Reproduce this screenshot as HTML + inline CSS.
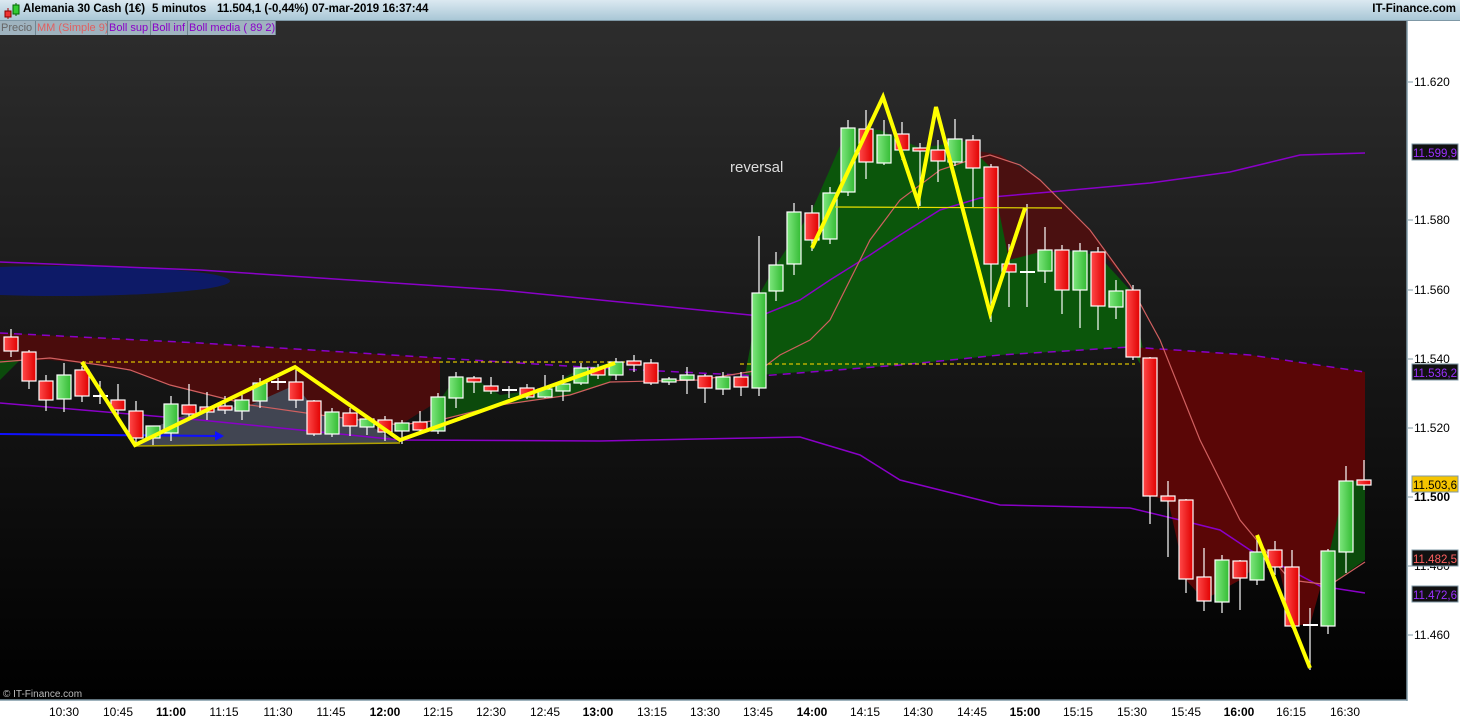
<!DOCTYPE html>
<html><head><meta charset="utf-8">
<style>
body{margin:0;width:1460px;height:720px;overflow:hidden;background:#fff;font-family:"Liberation Sans",sans-serif;position:relative}
#top{position:absolute;left:0;top:0;width:1460px;height:20px;background:linear-gradient(#dbe9f1,#a9c7d6);border-bottom:1px solid #7f98a6;font-size:11.5px;font-weight:bold;color:#000}
#top span{position:absolute;top:3px}
#leg{position:absolute;left:0;top:21px;height:14px;font-size:11px;display:flex;white-space:nowrap}
#leg div{background:#9fb3bf;border-right:1px solid #6f8591;padding:0 1px;line-height:14px;height:14px;overflow:hidden;white-space:nowrap;flex:none;box-sizing:border-box}
svg{position:absolute;left:0;top:0}
</style></head><body>
<svg id="c" width="1460" height="720" xmlns="http://www.w3.org/2000/svg">
<defs>
<linearGradient id="bg" x1="0" y1="0" x2="0" y2="1"><stop offset="0" stop-color="#2d2d2d"/><stop offset="1" stop-color="#000"/></linearGradient>
<linearGradient id="gr" x1="0" y1="0" x2="1" y2="0"><stop offset="0" stop-color="#7fe77f"/><stop offset="1" stop-color="#33bb33"/></linearGradient>
<linearGradient id="rd" x1="0" y1="0" x2="1" y2="0"><stop offset="0" stop-color="#ff4a4a"/><stop offset="1" stop-color="#e00000"/></linearGradient>
</defs>
<rect x="0" y="21" width="1407" height="679" fill="url(#bg)"/>
<ellipse cx="60" cy="281" rx="170" ry="15" fill="#0a1a7a" opacity="0.8"/>
<polygon fill="#4a0c0c" points="0,333 200,343 440,358 440,400 400,425 320,415 250,405 170,385 130,370 100,365 50,360 0,360"/>
<polygon fill="#0c4a0c" points="440,400 456,377 474,378 500,395 545,389 581,368 616,362 610,382 570,395 500,405 440,420"/>
<polygon fill="#0c4a0c" points="0,360 20,360 0,380"/>
<polygon fill="#414552" points="135,446 400,443 360,420 320,415 295,385 250,405 190,413 160,425"/>
<polygon fill="#0b560b" points="745,376 900,365 1000,355 1130,347 1150,380 1130,290 1098,255 1062,250 1040,255 990,167 973,140 920,148 880,130 848,128 812,210 776,265 760,293"/>
<polygon fill="#4a1010" points="973,150 1000,155 1040,180 1090,230 1130,285 1100,250 1062,250 1040,252 1009,260 990,167"/>
<polygon fill="#5a0606" points="1130,347 1250,355 1365,372 1365,550 1330,553 1310,625 1292,625 1275,550 1240,580 1204,600 1186,580 1168,500 1150,496 1140,358"/>
<polygon fill="#0b4a0b" points="1330,550 1346,481 1365,481 1365,560 1330,585"/>
<polyline fill="none" stroke="#8a00c8" stroke-width="1.5" points="0,262 200,270 500,290 700,310 760,316 800,300 830,280 870,255 900,235 940,210 980,198 1050,192 1150,183 1230,172 1300,155 1365,153"/>
<polyline fill="none" stroke="#8a00c8" stroke-width="1.5" points="0,403 200,420 400,440 600,441 800,437 860,455 900,480 1000,505 1130,508 1180,520 1220,530 1250,550 1290,570 1320,586 1365,593"/>
<polyline fill="none" stroke="#8a00c8" stroke-width="1.5" stroke-dasharray="8,6" points="0,333 200,343 440,358 600,368 760,376 900,365 1000,355 1130,347 1250,355 1365,372"/>
<polyline fill="none" stroke="#d06060" stroke-width="1.2" points="0,362 50,358 100,365 130,370 170,385 250,405 320,415 400,425 440,420 500,405 570,395 610,382 700,380 760,370 780,355 810,340 830,320 870,240 900,200 940,170 970,160 990,155 1020,165 1040,180 1090,230 1130,285 1160,340 1200,440 1240,520 1290,580 1330,585 1365,562"/>
<line x1="82" y1="362" x2="640" y2="362" stroke="#d8c000" stroke-width="1.2" stroke-dasharray="4,3"/>
<line x1="740" y1="364" x2="1135" y2="364" stroke="#d8c000" stroke-width="1.2" stroke-dasharray="4,3"/>
<line x1="0" y1="434" x2="215" y2="436" stroke="#1010ff" stroke-width="2"/>
<polygon points="215,431 224,436 215,441" fill="#1010ff"/>
<g id="candles"></g>
<line x1="135" y1="446" x2="400" y2="443" stroke="#b0a000" stroke-width="1.5"/>
<line x1="835" y1="207" x2="1062" y2="208" stroke="#e8e000" stroke-width="1.2"/>
<polyline fill="none" stroke="#ffff00" stroke-width="4" points="82,362 135,445 295,367 400,440 615,363"/>
<polyline fill="none" stroke="#ffff00" stroke-width="4" points="812,248 883,97 918,202 936,107 990,313 1025,208"/>
<line x1="1257" y1="535" x2="1310" y2="668" stroke="#ffff00" stroke-width="4"/>
<text x="730" y="172" fill="#dcdcdc" font-size="15" font-family="Liberation Sans">reversal</text>
<text x="3" y="697" fill="#bbb" font-size="10" font-family="Liberation Sans">© IT-Finance.com</text>
<rect x="1407" y="21" width="53" height="699" fill="#fff"/>
<rect x="0" y="700" width="1460" height="20" fill="#fff"/>
<line x1="1407" y1="21" x2="1407" y2="701" stroke="#7f98a6" stroke-width="1.5"/>
<line x1="0" y1="700" x2="1407" y2="700" stroke="#7f98a6" stroke-width="1.5"/>
<g font-size="12" font-family="Liberation Sans" fill="#000">
<g stroke="#7f98a6"><line x1="1408" y1="82" x2="1413" y2="82"/><line x1="1408" y1="220" x2="1413" y2="220"/><line x1="1408" y1="290" x2="1413" y2="290"/><line x1="1408" y1="359" x2="1413" y2="359"/><line x1="1408" y1="428" x2="1413" y2="428"/><line x1="1408" y1="497" x2="1413" y2="497"/><line x1="1408" y1="566" x2="1413" y2="566"/><line x1="1408" y1="635" x2="1413" y2="635"/></g>
<text x="1414" y="86">11.620</text><text x="1414" y="224">11.580</text><text x="1414" y="294">11.560</text><text x="1414" y="363">11.540</text><text x="1414" y="432">11.520</text><text x="1414" y="501" font-weight="bold">11.500</text><text x="1414" y="570">11.480</text><text x="1414" y="639">11.460</text>
</g>
<g font-size="11.5" font-family="Liberation Sans">
<rect x="1412" y="144" width="46" height="16" fill="#111" stroke="#7f98a6"/><text x="1413" y="157" fill="#9b30ff" textLength="44">11.599,9</text>
<rect x="1412" y="364" width="46" height="16" fill="#111" stroke="#7f98a6"/><text x="1413" y="377" fill="#9b30ff" textLength="44">11.536,2</text>
<rect x="1412" y="476" width="46" height="16" fill="#f5c400" stroke="#7f98a6"/><text x="1413" y="489" fill="#000" textLength="44">11.503,6</text>
<rect x="1412" y="550" width="46" height="16" fill="#111" stroke="#7f98a6"/><text x="1413" y="563" fill="#ff6060" textLength="44">11.482,5</text>
<rect x="1412" y="586" width="46" height="16" fill="#111" stroke="#7f98a6"/><text x="1413" y="599" fill="#9b30ff" textLength="44">11.472,6</text>
</g>
<g font-size="12" font-family="Liberation Sans" fill="#000" text-anchor="middle">
<text x="64" y="716">10:30</text><text x="118" y="716">10:45</text><text x="171" y="716" font-weight="bold">11:00</text><text x="224" y="716">11:15</text><text x="278" y="716">11:30</text><text x="331" y="716">11:45</text><text x="385" y="716" font-weight="bold">12:00</text><text x="438" y="716">12:15</text><text x="491" y="716">12:30</text><text x="545" y="716">12:45</text><text x="598" y="716" font-weight="bold">13:00</text><text x="652" y="716">13:15</text><text x="705" y="716">13:30</text><text x="758" y="716">13:45</text><text x="812" y="716" font-weight="bold">14:00</text><text x="865" y="716">14:15</text><text x="918" y="716">14:30</text><text x="972" y="716">14:45</text><text x="1025" y="716" font-weight="bold">15:00</text><text x="1078" y="716">15:15</text><text x="1132" y="716">15:30</text><text x="1186" y="716">15:45</text><text x="1239" y="716" font-weight="bold">16:00</text><text x="1291" y="716">16:15</text><text x="1345" y="716">16:30</text>
</g>
</svg>
<div id="top">
<svg width="20" height="20" style="left:3px;top:1px"><line x1="5" y1="7" x2="5" y2="18" stroke="#a00"/><rect x="2" y="10" width="6" height="6" fill="#e33" stroke="#800"/><line x1="13" y1="2" x2="13" y2="15" stroke="#060"/><rect x="10" y="4" width="6" height="9" fill="#3c3" stroke="#060"/></svg>
<span style="left:23px">Alemania 30 Cash (1€)</span><span style="left:152px">5 minutos</span><span style="left:217px">11.504,1 (-0,44%)</span><span style="left:312px">07-mar-2019 16:37:44</span>
<span style="right:4px">IT-Finance.com</span>
</div>
<div id="leg"><div style="color:#666;width:36px">Precio</div><div style="color:#e06060;width:72px">MM (Simple 9)</div><div style="color:#8a00c8;width:43px">Boll sup</div><div style="color:#8a00c8;width:37px">Boll inf</div><div style="color:#8a00c8;width:88px">Boll media ( 89 2)</div></div>
<script>
var d=[[11,'r',337,351,329,357],[29,'r',352,381,350,389],[46,'r',381,400,375,411],[64,'g',375,399,363,412],[82,'r',370,396,366,402],[100,'d',396,396,381,404],[118,'r',400,410,384,418],[136,'r',411,438,401,444],[153,'g',426,438,426,446],[171,'g',404,433,396,441],[189,'r',405,414,384,420],[207,'r',407,412,392,420],[225,'r',406,410,396,414],[242,'g',400,411,395,420],[260,'g',383,401,378,408],[278,'d',382,382,378,390],[296,'r',382,400,370,408],[314,'r',401,434,400,436],[332,'g',412,434,408,437],[350,'r',413,426,408,436],[367,'g',419,427,415,435],[385,'r',420,432,416,441],[402,'g',423,431,420,444],[420,'r',422,430,411,434],[438,'g',397,431,393,434],[456,'g',377,398,372,408],[474,'r',378,382,376,393],[491,'r',386,391,377,394],[509,'d',390,390,386,398],[527,'r',388,397,384,399],[545,'g',389,397,375,398],[563,'g',384,391,375,401],[581,'g',368,383,363,385],[598,'r',368,375,364,379],[616,'g',362,375,358,380],[634,'r',361,365,355,372],[651,'r',363,383,359,385],[669,'g',379,382,377,385],[687,'g',375,380,367,394],[705,'r',376,388,374,403],[723,'g',377,389,372,395],[741,'r',377,387,372,396],[759,'g',293,388,236,396],[776,'g',265,291,252,301],[794,'g',212,264,203,275],[812,'r',213,240,205,251],[830,'g',193,239,187,244],[848,'g',128,192,120,196],[866,'r',129,162,110,179],[884,'g',135,163,120,165],[902,'r',134,150,122,160],[920,'r',148,151,143,206],[938,'r',150,161,140,182],[955,'g',139,162,119,166],[973,'r',140,168,135,207],[991,'r',167,264,164,322],[1009,'r',264,272,244,307],[1027,'d',272,272,204,307],[1045,'g',250,271,227,283],[1062,'r',250,290,245,314],[1080,'g',251,290,243,328],[1098,'r',252,306,247,330],[1116,'g',291,307,280,319],[1133,'r',290,357,285,360],[1150,'r',358,496,357,524],[1168,'r',496,501,481,557],[1186,'r',500,579,499,593],[1204,'r',577,601,548,611],[1222,'g',560,602,555,613],[1240,'r',561,578,560,610],[1257,'g',552,580,540,585],[1275,'r',550,567,541,575],[1292,'r',567,626,550,628],[1310,'d',625,625,608,670],[1328,'g',551,626,549,634],[1346,'g',481,552,466,573],[1364,'r',480,485,460,490]];
var g=document.getElementById('candles'),s='';
d.forEach(function(c){var x=c[0];s+='<line x1="'+x+'" y1="'+c[4]+'" x2="'+x+'" y2="'+c[5]+'" stroke="#fff" stroke-width="1.2"/>';
if(c[1]=='d'){s+='<rect x="'+(x-7)+'" y="'+(c[2]-1)+'" width="15" height="2" fill="#fff"/>';}
else{var h=Math.max(c[3]-c[2],3);s+='<rect x="'+(x-7)+'" y="'+c[2]+'" width="14" height="'+h+'" fill="url(#'+(c[1]=='g'?'gr':'rd')+')" stroke="#fff" stroke-width="1.2"/>';}});
g.innerHTML=s;
</script>
</body></html>
